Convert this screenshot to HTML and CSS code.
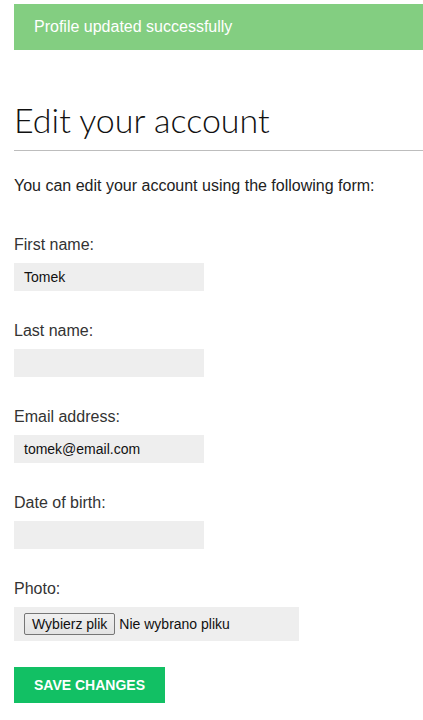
FILE: index.html
```html
<!DOCTYPE html>
<html lang="en">
<head>
<meta charset="utf-8">
<title>Edit your account</title>
<link rel="stylesheet" href="styles.css">
</head>
<body>
<div class="page">
  <div class="alert">Profile updated successfully</div>
  <h1 class="title">Edit your account</h1>
  <hr class="rule">
  <p class="intro">You can edit your account using the following form:</p>
  <form class="form">
    <div class="group">
      <label class="label">First name:</label>
      <div class="field">Tomek</div>
    </div>
    <div class="group">
      <label class="label">Last name:</label>
      <div class="field"></div>
    </div>
    <div class="group">
      <label class="label">Email address:</label>
      <div class="field">tomek@email.com</div>
    </div>
    <div class="group">
      <label class="label">Date of birth:</label>
      <div class="field"></div>
    </div>
    <div class="group last">
      <label class="label">Photo:</label>
      <div class="file">
        <span class="file-btn">Wybierz plik</span>
        <span class="file-name">Nie wybrano pliku</span>
      </div>
    </div>
    <div class="save">SAVE CHANGES</div>
  </form>
</div>
</body>
</html>
```
FILE: styles.css
```css
html, body {
  margin: 0;
  padding: 0;
  background: #ffffff;
}
.page {
  padding: 4px 0 0 14px;
  font-family: "Liberation Sans", Arial, sans-serif;
  color: #333333;
}
.alert {
  height: 46px;
  line-height: 46px;
  padding-left: 20px;
  background: #83ce81;
  color: #ffffff;
  font-size: 16px;
}
.title {
  margin: 50px 0 0 0;
  font-family: Lato, "Open Sans", sans-serif;
  font-weight: 300;
  font-size: 34px;
  line-height: 40px;
  color: #111111;
}
.rule {
  margin: 10px 0 0 0;
  border: 0;
  border-top: 1px solid #bdbdbd;
  height: 0;
}
.intro {
  margin: 26px 0 0 0;
  font-size: 16px;
  line-height: 18px;
  color: #222222;
}
.form {
  margin-top: 41px;
}
.group {
  margin-bottom: 31px;
}
.group.last {
  margin-bottom: 26px;
}
.label {
  display: block;
  font-size: 16px;
  line-height: 18px;
  margin-bottom: 9px;
  color: #333333;
}
.field {
  width: 180px;
  height: 28px;
  line-height: 28px;
  padding: 0 0 0 10px;
  background: #eeeeee;
  font-size: 14px;
  color: #111111;
}
.file {
  width: 275px;
  height: 34px;
  padding-left: 10px;
  background: #eeeeee;
  display: flex;
  align-items: center;
  font-size: 14px;
  color: #111111;
}
.file-btn {
  box-sizing: border-box;
  height: 22px;
  line-height: 20px;
  padding: 0 7px;
  border: 1px solid #767676;
  border-radius: 2px;
  background: linear-gradient(#f0f0f0, #e3e3e3);
  color: #111111;
  margin-right: 4px;
}
.save {
  display: inline-block;
  height: 36px;
  line-height: 36px;
  padding: 0 20px;
  background: #12c064;
  color: #ffffff;
  font-weight: 700;
  font-size: 14px;
}
```
